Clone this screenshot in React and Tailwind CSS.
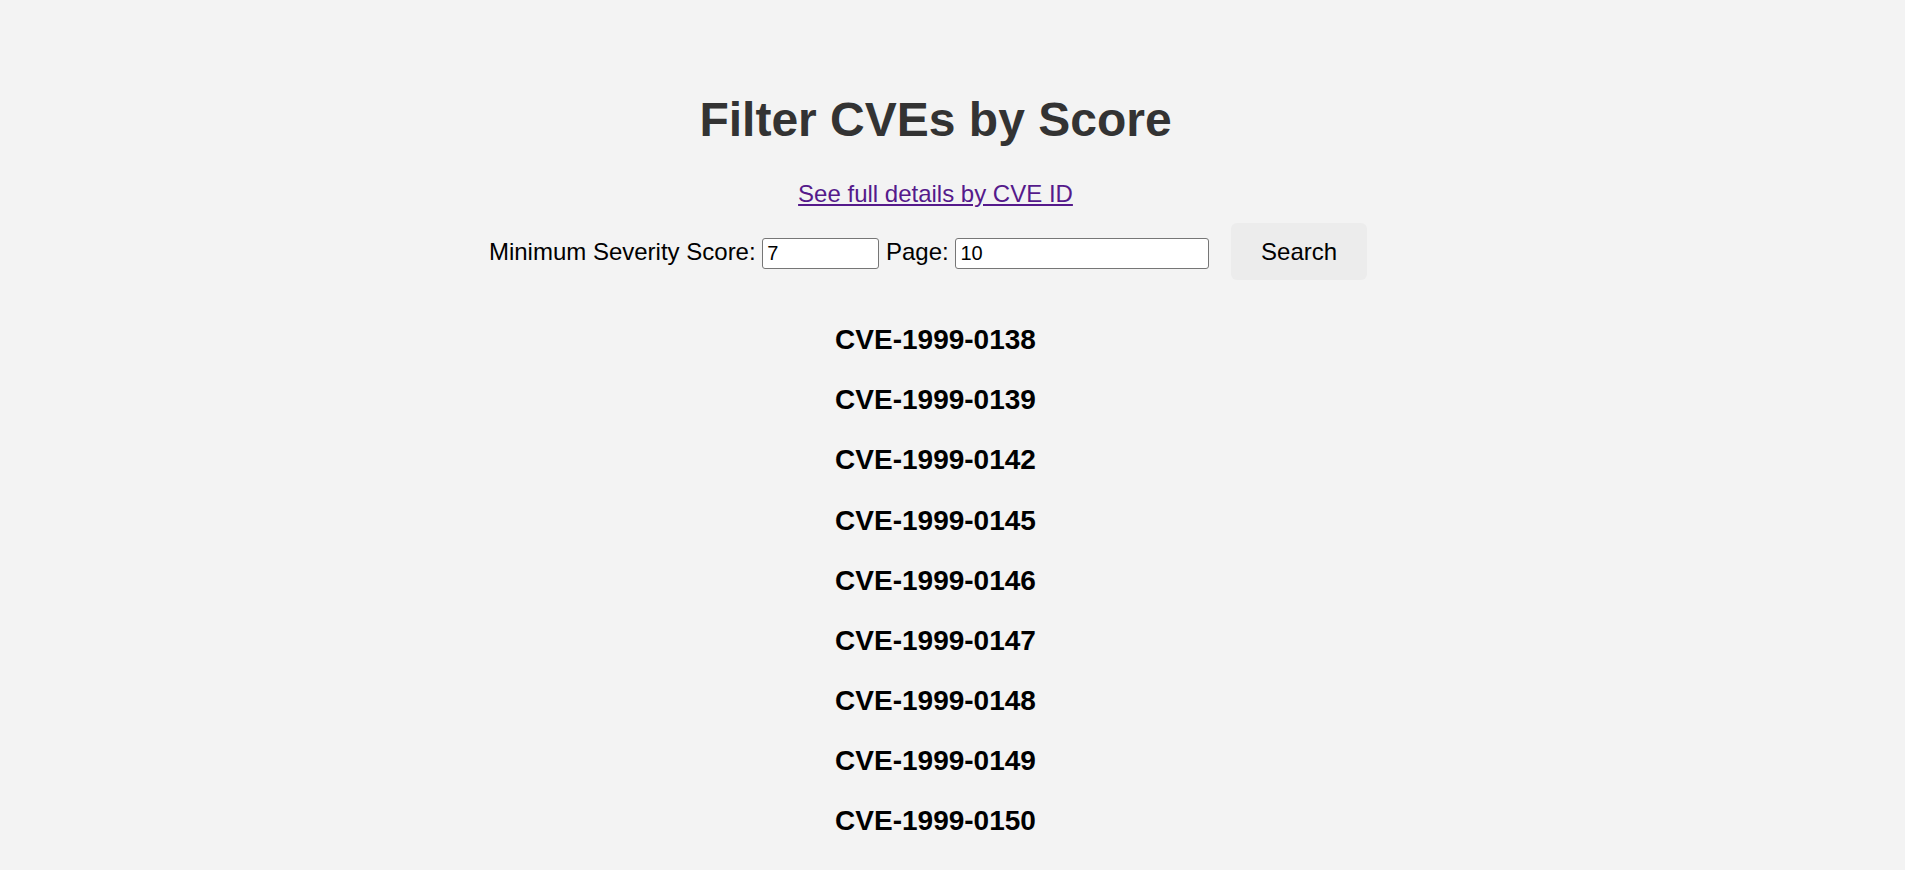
import React from "react";

const App = () => {
  // Results for the current page of the score filter
  const cves = [
    "CVE-1999-0138",
    "CVE-1999-0139",
    "CVE-1999-0142",
    "CVE-1999-0145",
    "CVE-1999-0146",
    "CVE-1999-0147",
    "CVE-1999-0148",
    "CVE-1999-0149",
    "CVE-1999-0150",
  ];

  return (
    <div className="min-h-screen bg-[#f3f3f3] font-['Liberation_Sans',Arial,sans-serif] text-black">
      <div className="w-[1871px] pt-[92px] pb-[130px] text-center">
        <h1 className="text-[48px] leading-[55px] font-bold text-[#333333]">
          Filter CVEs by Score
        </h1>

        <p className="mt-[33px] text-[24px] leading-[27.6px]">
          <a href="#" className="text-[#551a8b] underline">
            See full details by CVE ID
          </a>
        </p>

        {/* Search form */}
        <form
          className="mt-[15px] text-[24px] leading-[27.6px]"
          onSubmit={(e) => e.preventDefault()}
        >
          <label>Minimum Severity Score:</label>{" "}
          <input
            type="text"
            defaultValue="7"
            className="inline-block w-[117px] h-[31px] px-[4px] bg-white border border-[#767676] rounded-[3px] text-[20px] leading-[23px] align-baseline"
          />{" "}
          <label>Page:</label>{" "}
          <input
            type="text"
            defaultValue="10"
            className="inline-block w-[254px] h-[31px] px-[4px] bg-white border border-[#767676] rounded-[3px] text-[20px] leading-[23px] align-baseline"
          />{" "}
          <button
            type="submit"
            className="inline-block mx-[15px] px-[30px] py-[15px] bg-[#ececec] rounded-[6px] text-[24px] leading-[27.6px]"
          >
            Search
          </button>
        </form>

        {/* Result list */}
        <div className="mt-[44px] flex flex-col gap-[27.85px]">
          {cves.map((id) => (
            <h3 key={id} className="text-[28px] leading-[32.3px] font-bold">
              {id}
            </h3>
          ))}
        </div>
      </div>
    </div>
  );
};

export default App;
